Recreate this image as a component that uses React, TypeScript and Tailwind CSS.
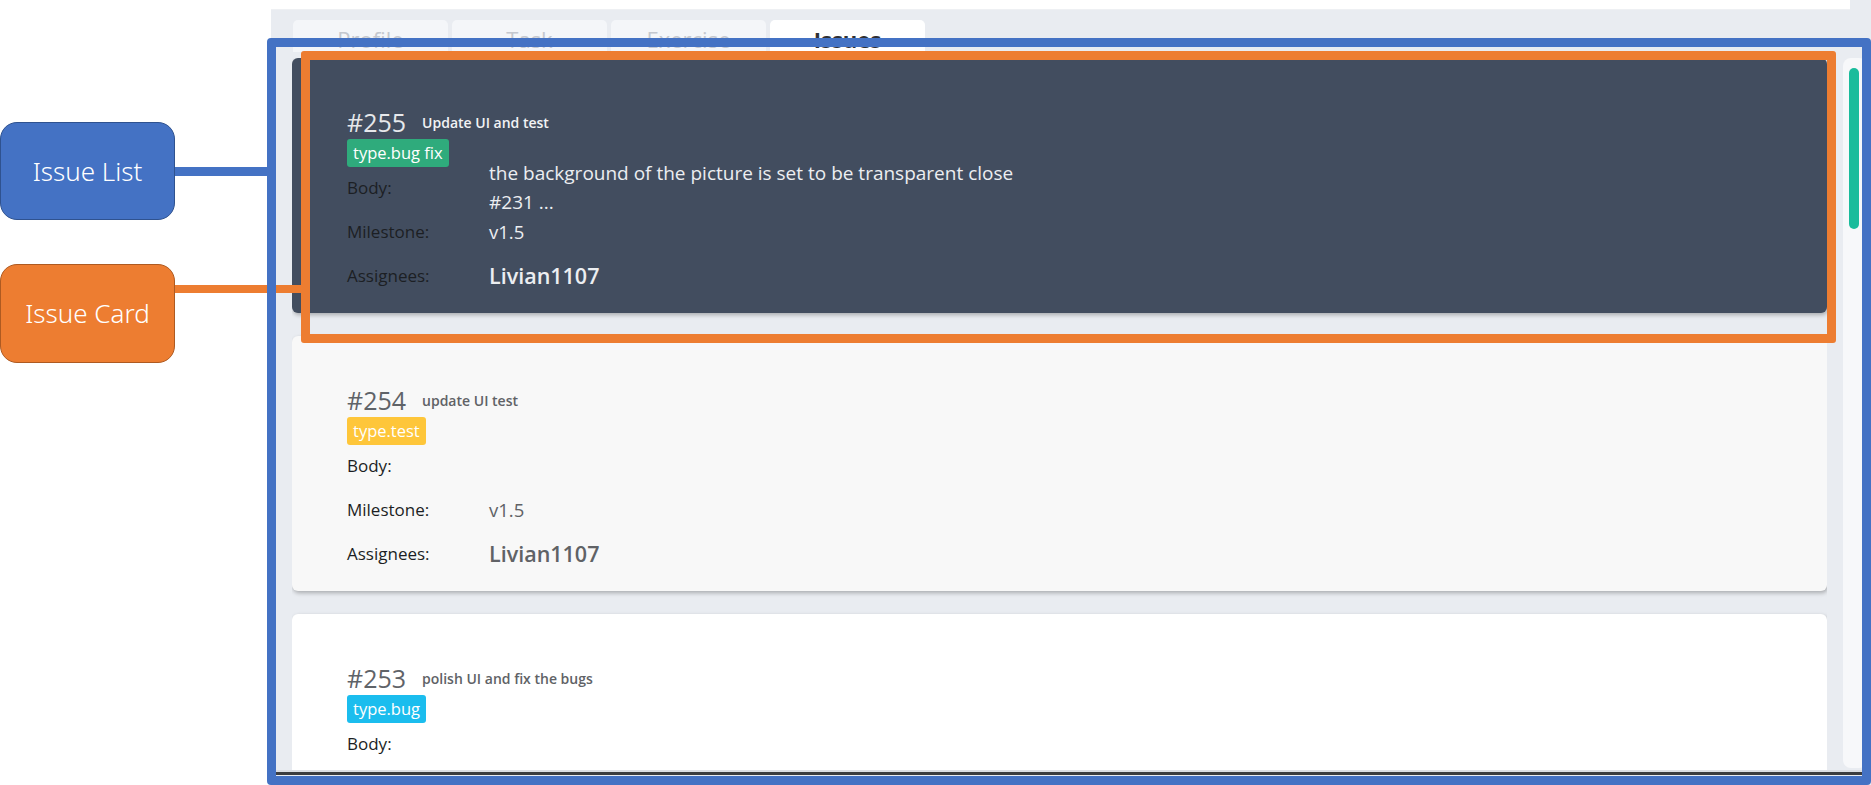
import React from "react";

interface Issue {
  number: number;
  title: string;
  tag: string;
  tagClass: string;
  body: string[];
  milestone: string;
  assignees: string;
  variant: "active" | "hover" | "normal";
}

const issues: Issue[] = [
  {
    number: 255,
    title: "Update UI and test",
    tag: "type.bug fix",
    tagClass: "bg-[#2fab7c]",
    body: ["the background of the picture is set to be transparent close", "#231 ..."],
    milestone: "v1.5",
    assignees: "Livian1107",
    variant: "active",
  },
  {
    number: 254,
    title: "update UI test",
    tag: "type.test",
    tagClass: "bg-[#fec63a]",
    body: [],
    milestone: "v1.5",
    assignees: "Livian1107",
    variant: "hover",
  },
  {
    number: 253,
    title: "polish UI and fix the bugs",
    tag: "type.bug",
    tagClass: "bg-[#1bbdee]",
    body: [],
    milestone: "v1.5",
    assignees: "Livian1107",
    variant: "normal",
  },
];

const tabs = ["Profile", "Task", "Exercise", "Issues"];

function IssueCard({ issue }: { issue: Issue }) {
  const dark = issue.variant === "active";
  const cardBg = dark ? "bg-[#424d5f]" : issue.variant === "hover" ? "bg-[#f8f8f8]" : "bg-white";
  const numColor = dark ? "text-[#e6e8eb]" : "text-[#5f6368]";
  const subColor = dark ? "text-[#f2f3f5]" : "text-[#606266]";
  const valueColor = dark ? "text-[#eceef1]" : "text-[#606266]";
  const labelColor = "text-[#1c1f24]";

  return (
    <div
      className={`${cardBg} h-[255px] shrink-0 rounded-[6px] pl-[55px] pt-[50px] shadow-[1px_2px_4px_rgba(0,0,0,0.28)]`}
    >
      <div className="flex h-[28px] items-center">
        <span className={`${numColor} text-[25px] leading-[28px]`}>#{issue.number}</span>
        <span className={`${subColor} ml-[16px] text-[14px] font-semibold`}>{issue.title}</span>
      </div>
      <div
        className={`${issue.tagClass} mt-[3px] inline-flex h-[28px] items-center rounded-[3px] px-[6px] text-[16.5px] text-white`}
      >
        {issue.tag}
      </div>
      <div className="flex h-[42px] items-center">
        <span className={`${labelColor} w-[142px] shrink-0 text-[17px]`}>Body:</span>
        <div className={`${valueColor} text-[19px] leading-[29px]`}>
          {issue.body.map((line) => (
            <div key={line}>{line}</div>
          ))}
        </div>
      </div>
      <div className="flex h-[45px] items-center">
        <span className={`${labelColor} w-[142px] shrink-0 text-[17px]`}>Milestone:</span>
        <span className={`${valueColor} text-[18.5px]`}>{issue.milestone}</span>
      </div>
      <div className="flex h-[44px] items-center">
        <span className={`${labelColor} w-[142px] shrink-0 text-[17px]`}>Assignees:</span>
        <span className={`${valueColor} text-[21.5px] font-semibold`}>{issue.assignees}</span>
      </div>
    </div>
  );
}

export default function App() {
  return (
    <div
      className="relative flex h-[785px] w-[1871px] overflow-hidden bg-white"
      style={{ fontFamily: '"Open Sans", "Noto Sans", sans-serif' }}
    >
      {/* left blank column, callouts sit over it */}
      <div className="w-[271px] shrink-0" />

      <div className="flex min-w-0 flex-1 flex-col bg-[#e9ecf1]">
        <div className="mr-[21px] h-[10px] shrink-0 border-b border-[#eef0f3] bg-white" />

        <div className="mt-[10px] flex h-[32px] shrink-0 gap-[4px] pl-[22px]">
          {tabs.map((t) => {
            const active = t === "Issues";
            return (
              <div
                key={t}
                className={`flex w-[155px] justify-center rounded-t-[5px] pt-[5px] text-[22px] leading-[28px] ${
                  active ? "bg-white font-bold text-[#303133]" : "bg-[#f4f6f9] text-[#c4c8cf]"
                }`}
              >
                {t}
              </div>
            );
          })}
        </div>

        <div className="mt-[6px] flex min-h-0 flex-1 gap-[16px] pl-[21px]">
          <div className="flex w-[1535px] shrink-0 flex-col gap-[23px] overflow-hidden pb-[4px]">
            {issues.map((i) => (
              <IssueCard key={i.number} issue={i} />
            ))}
          </div>
          <div className="mb-[2px] w-[24px] shrink-0 rounded-[8px] bg-[#f7f8fa] pl-[6px] pt-[10px]">
            <div className="h-[161px] w-[10px] rounded-full bg-[#1abc9c]" />
          </div>
        </div>

        <div className="h-[2px] shrink-0 bg-[#dcdfe4]" />
        <div className="h-[3px] shrink-0 bg-[#3b3d40]" />
        <div className="h-[10px] shrink-0" />
      </div>

      {/* annotation overlay */}
      <div className="absolute left-[174px] top-[285px] h-[8px] w-[128px] bg-[#ed7d31]" />
      <div className="absolute left-[174px] top-[167px] h-[9px] w-[94px] bg-[#4472c4]" />
      <div className="absolute left-[267px] top-[38px] h-[747px] w-[1604px] rounded-[4px] border-[9px] border-[#4472c4]" />
      <div className="absolute left-[301px] top-[51px] h-[292px] w-[1535px] rounded-[3px] border-[9px] border-[#ed7d31]" />

      <div
        className="absolute left-0 top-[122px] flex h-[98px] w-[175px] items-center justify-center rounded-[17px] border-[1.5px] border-[#2f528f] bg-[#4472c4] text-[26px] font-light text-white"
        style={{ fontFamily: '"Noto Sans", sans-serif' }}
      >
        Issue List
      </div>
      <div
        className="absolute left-0 top-[264px] flex h-[99px] w-[175px] items-center justify-center rounded-[17px] border-[1.5px] border-[#ae5a21] bg-[#ed7d31] text-[26px] font-light text-white"
        style={{ fontFamily: '"Noto Sans", sans-serif' }}
      >
        Issue Card
      </div>
    </div>
  );
}
